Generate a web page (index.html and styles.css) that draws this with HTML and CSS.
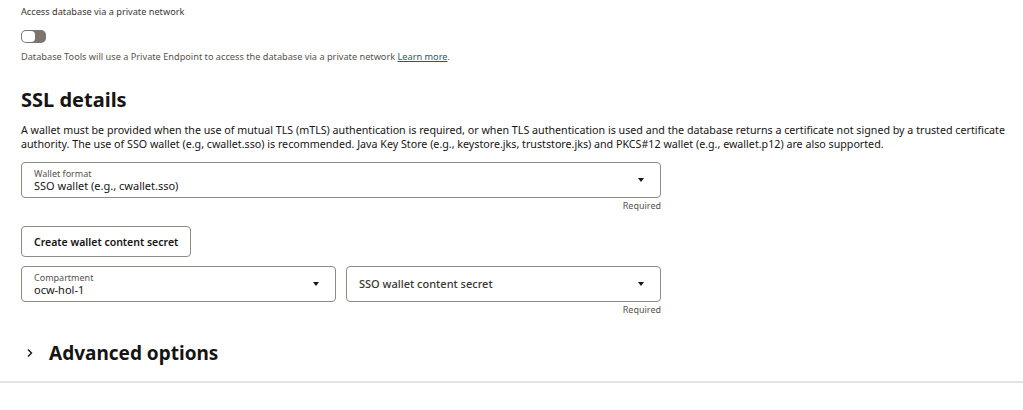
FILE: index.html
```html
<!DOCTYPE html>
<html>
<head>
<meta charset="utf-8">
<link rel="stylesheet" href="styles.css">
</head>
<body>
<div class="page">
  <div class="field-label">Access database via a private network</div>
  <div class="toggle"><span class="knob"></span></div>
  <div class="helper">Database Tools will use a Private Endpoint to access the database via a private network <a href="#" class="link">Learn more</a>.</div>

  <h2 class="section-title">SSL details</h2>
  <p class="desc">A wallet must be provided when the use of mutual TLS (mTLS) authentication is required, or when TLS authentication is used and the database returns a certificate not signed by a trusted certificate authority. The use of SSO wallet (e.g, cwallet.sso) is recommended. Java Key Store (e.g., keystore.jks, truststore.jks) and PKCS#12 wallet (e.g., ewallet.p12) are also supported.</p>

  <div class="field wide">
    <div class="select">
      <div class="select-text">
        <div class="select-label">Wallet format</div>
        <div class="select-value">SSO wallet (e.g., cwallet.sso)</div>
      </div>
      <span class="caret"></span>
    </div>
    <div class="required">Required</div>
  </div>

  <button class="btn">Create wallet content secret</button>

  <div class="row">
    <div class="field half">
      <div class="select">
        <div class="select-text">
          <div class="select-label">Compartment</div>
          <div class="select-value">ocw-hol-1</div>
        </div>
        <span class="caret"></span>
      </div>
    </div>
    <div class="field half">
      <div class="select">
        <div class="select-text">
          <div class="select-placeholder">SSO wallet content secret</div>
        </div>
        <span class="caret"></span>
      </div>
      <div class="required">Required</div>
    </div>
  </div>

  <div class="advanced">
    <svg class="chev" width="8" height="10" viewBox="0 0 8 10"><path d="M2 1.5 L5.5 5 L2 8.5" fill="none" stroke="#161513" stroke-width="1.4"/></svg>
    <span class="adv-title">Advanced options</span>
  </div>
</div>
<div class="divider"></div>
</body>
</html>
```

FILE: styles.css
```css
* { box-sizing: border-box; }
html, body { margin: 0; padding: 0; background: #fff; }
body {
  font-family: "Noto Sans", "Open Sans", sans-serif;
  color: #161513;
  width: 1023px;
}
.page {
  padding: 5px 4px 0 21px;
}
.field-label {
  font-size: 9.2px;
  line-height: 14px;
  color: #3a3632;
}
.toggle {
  margin-top: 11px;
  width: 25px;
  height: 13px;
  border-radius: 5px;
  background: #7b746f;
  position: relative;
}
.knob {
  position: absolute;
  left: 1px;
  top: 1px;
  width: 13px;
  height: 11px;
  border-radius: 4px;
  background: #fff;
}
.helper {
  margin-top: 7px;
  font-size: 9.2px;
  line-height: 14px;
  color: #57524e;
}
.link {
  color: #2d5967;
  text-decoration: underline;
}
.section-title {
  margin: 23px 0 0;
  font-size: 20px;
  line-height: 26px;
  font-weight: 700;
}
.desc {
  margin: 10px 0 0;
  font-size: 10.7px;
  line-height: 14px;
  color: #161513;
}
.field { display: flex; flex-direction: column; }
.wide { width: 640px; margin-top: 11px; }
.select {
  height: 36px;
  border: 1px solid #8f8a86;
  border-radius: 4px;
  display: flex;
  align-items: center;
  padding: 0 16px 0 12px;
}
.select-text { flex: 1; }
.select-label {
  font-size: 9px;
  line-height: 11px;
  color: #57524e;
}
.select-value {
  font-size: 11px;
  line-height: 14px;
  color: #161513;
}
.select-placeholder {
  font-size: 11px;
  line-height: 14px;
  color: #3a3632;
  font-weight: 500;
}
.caret {
  width: 0;
  height: 0;
  border-left: 3.5px solid transparent;
  border-right: 3.5px solid transparent;
  border-top: 4px solid #161513;
}
.required {
  align-self: flex-end;
  font-size: 9px;
  line-height: 14px;
  margin-top: 1px;
  color: #57524e;
}
.btn {
  margin-top: 13px;
  height: 31px;
  padding: 0 12px;
  border: 1px solid #8f8a86;
  border-radius: 4px;
  background: #fff;
  font-family: inherit;
  font-size: 10.5px;
  font-weight: 600;
  color: #161513;
  display: block;
}
.row {
  margin-top: 9px;
  display: flex;
  gap: 10px;
  width: 640px;
  align-items: flex-start;
}
.half { flex: 1; }
.advanced {
  margin-top: 23px;
  display: flex;
  align-items: center;
  height: 26px;
}
.chev { margin-left: 5px; margin-right: 15px; }
.adv-title {
  font-size: 19px;
  font-weight: 700;
}
.divider {
  margin-top: 15px;
  height: 2px;
  background: #e4e2e0;
}
```
